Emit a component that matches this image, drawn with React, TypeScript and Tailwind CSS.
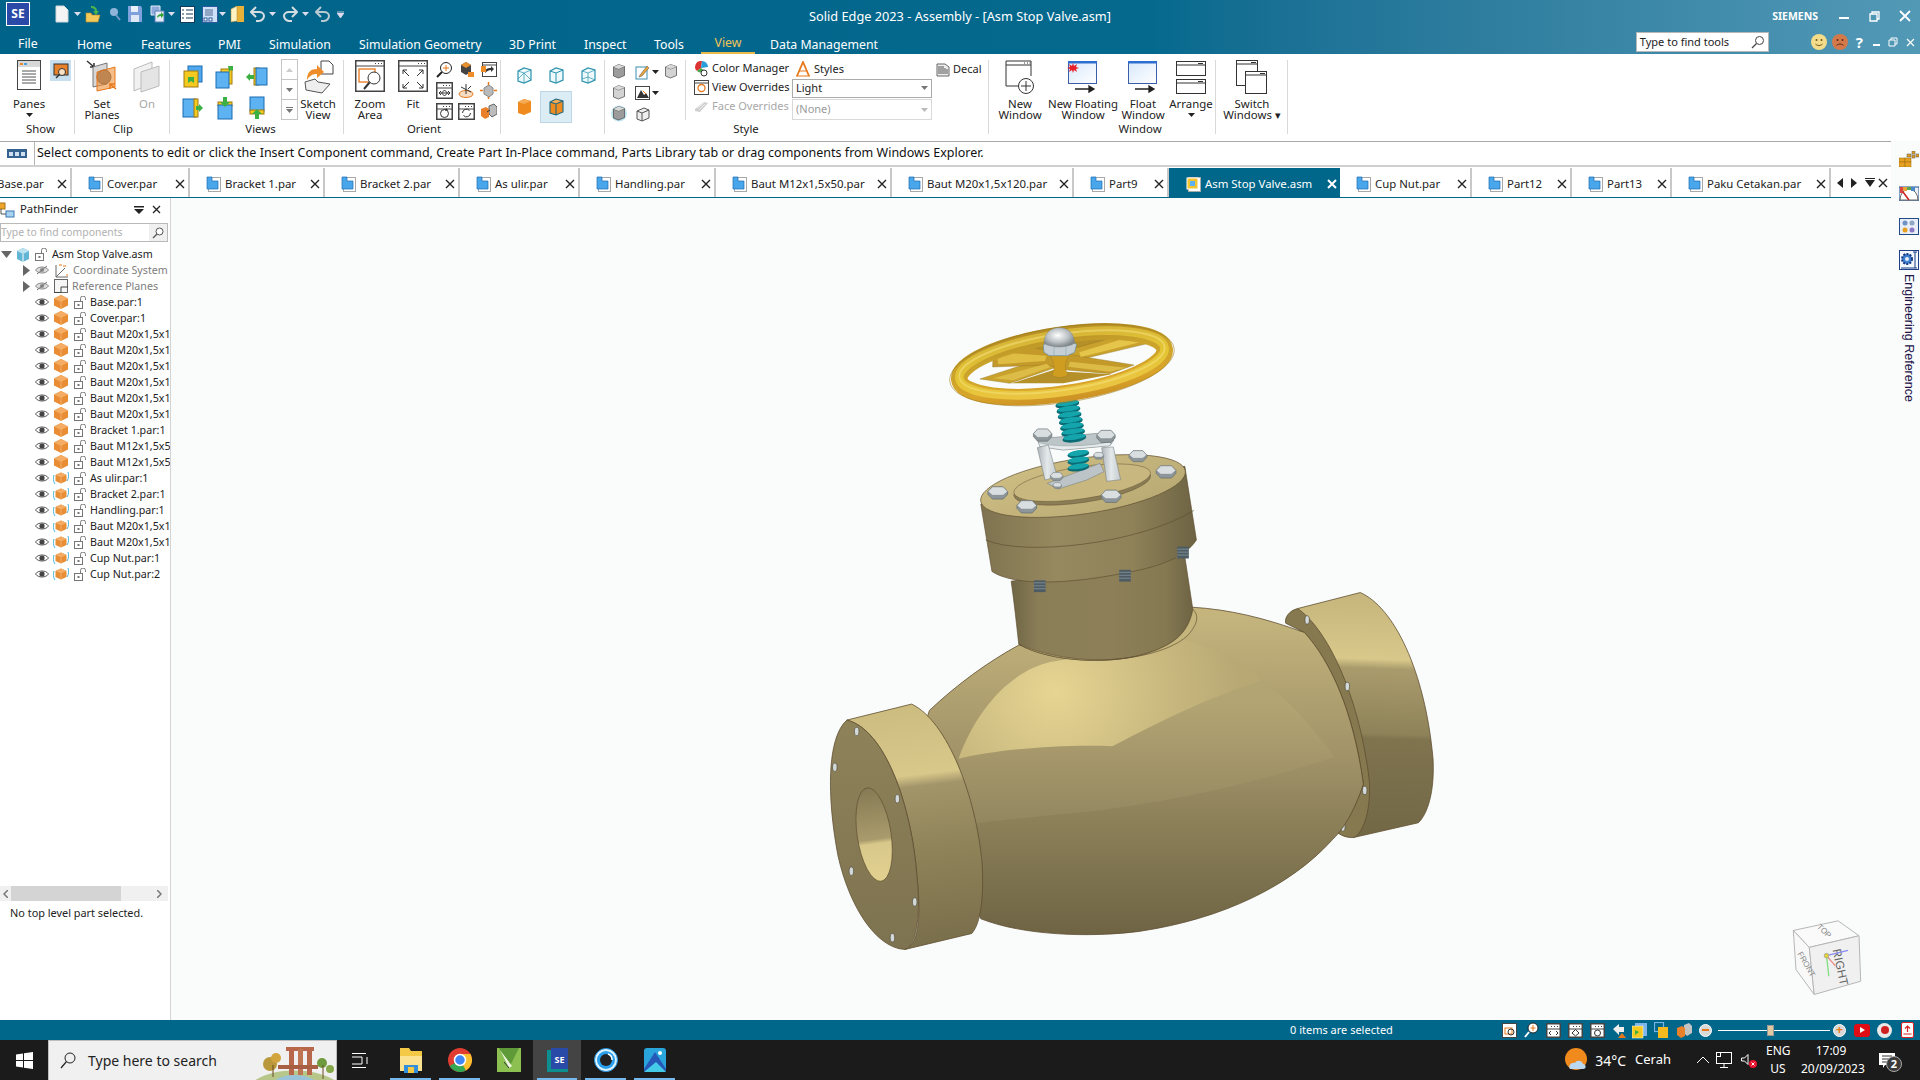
import React from 'react';

const Svg = ({ w, h, vb, children }: { w: number; h: number; vb?: string; children: React.ReactNode }) => (
  <svg width={w} height={h} viewBox={vb ?? `0 0 ${w} ${h}`} className="shrink-0">
    {children}
  </svg>
);

const Arrow = ({ color = '#222' }: { color?: string }) => (
  <Svg w={7} h={4}>
    <path d="M0 0h7L3.500 4z" fill={color} />
  </Svg>
);

/* ---------- quick access icons ---------- */
const QNew = () => (
  <Svg w={14} h={18}>
    <path d="M1 1h8l4 4v12H1z" fill="#f4f4f4" stroke="#cfd8dc" />
  </Svg>
);
const QOpen = () => (
  <Svg w={17} h={18}>
    <path d="M1 8h5l1 2h8l-2 7H1z" fill="#f3c95a" stroke="#b98d2a" strokeWidth="0.6" />
    <path d="M6 1c4 0 6 2 6 5h2l-3 4-3-4h2c0-2-2-3-4-3z" fill="#4bb34b" />
  </Svg>
);
const QSave = () => (
  <Svg w={16} h={18}>
    <path d="M1 1h13l1 2v14H1z" fill="#7fa1dc" />
    <rect x="4" y="1" width="7" height="6" fill="#e6effa" />
    <rect x="4" y="10" width="8" height="7" fill="#dfe8f5" />
  </Svg>
);
const QSaveAll = () => (
  <Svg w={16} h={18}>
    <path d="M1 1h9v9H1z" fill="#8fabdc" stroke="#e4ecf7" />
    <path d="M5 6h9v11H5z" fill="#e4ecf7" stroke="#5d7fb8" />
    <path d="M7 13c0-3 2-4 4-4v-2l3 3-3 3v-2c-2 0-3 1-4 2z" fill="#38a53c" />
  </Svg>
);
const QList = () => (
  <Svg w={15} h={17}>
    <rect x="0.500" y="0.500" width="14" height="16" fill="#fff" stroke="#16395b" />
    <path d="M2 4h2M6 4h7M2 8h2M6 8h7M2 12h2M6 12h7" stroke="#16395b" />
  </Svg>
);
const QProps = () => (
  <Svg w={16} h={17}>
    <rect x="0.500" y="0.500" width="15" height="16" fill="#cfe1f7" stroke="#2c5a9c" />
    <rect x="3" y="3" width="8" height="7" fill="#8fa6c4" />
    <rect x="2" y="12" width="3" height="3" fill="#fff" stroke="#2c5a9c" />
    <rect x="7" y="12" width="3" height="3" fill="#fff" stroke="#2c5a9c" />
  </Svg>
);
const QDoor = () => (
  <Svg w={15} h={18}>
    <rect x="7" y="1" width="7" height="16" fill="#e8b23a" />
    <path d="M7 1L1 4v13l6-1z" fill="#fff3c4" stroke="#b3872a" strokeWidth="0.5" />
  </Svg>
);
const QUndo = ({ flip = false, dim = false }: { flip?: boolean; dim?: boolean }) => (
  <Svg w={15} h={16}>
    <g transform={flip ? 'translate(15 0) scale(-1 1)' : undefined}>
      <path d="M6 1L1 6l5 5M1 6h8c3 0 5 2 5 4s-2 5-5 5H6" fill="none" stroke={dim ? '#b9c9d2' : '#d5dde2'} strokeWidth="2" />
    </g>
  </Svg>
);

/* ---------- ribbon icons ---------- */
const WindowFrame = ({ w, h, children }: { w: number; h: number; children?: React.ReactNode }) => (
  <Svg w={w} h={h}>
    <rect x="0.750" y="0.750" width={w - 1.5} height={h - 1.5} fill="#fff" stroke="#444" strokeWidth="1.500" />
    <path d={`M1 6h${w - 2}`} stroke="#444" />
    <path d={`M${w - 10} 3.500h1M${w - 7} 3.500h1M${w - 4} 3.500h1`} stroke="#444" />
    {children}
  </Svg>
);
const PanesIcon = () => (
  <Svg w={24} h={30}>
    <rect x="0.500" y="0.500" width="23" height="29" fill="#fff" stroke="#444" />
    <rect x="1" y="1" width="22" height="6" fill="#d8d8d8" />
    <rect x="3" y="3" width="3" height="2" fill="#e48a2c" />
    <rect x="7" y="3" width="3" height="2" fill="#4aa3df" />
    <path d="M5 11h14M5 14h14M5 17h14M5 20h14M5 23h14" stroke="#555" />
  </Svg>
);
const SearchPane = () => (
  <div className="w-[21px] h-[21px] bg-[#c7dfee] flex items-center justify-center">
    <Svg w={16} h={16}>
      <rect x="1" y="1" width="14" height="11" fill="#e8812a" stroke="#333" />
      <circle cx="9" cy="9" r="3.500" fill="#fbe2c6" stroke="#333" />
      <path d="M6.500 11.500L3 15" stroke="#333" strokeWidth="1.500" />
    </Svg>
  </div>
);
const SetPlanesIcon = () => (
  <Svg w={32} h={34}>
    <path d="M1 1l7 6M8 3v4H4" stroke="#333" fill="none" strokeWidth="1.500" />
    <path d="M7 7l14-4v21L7 27z" fill="#d8d8d8" stroke="#777" />
    <circle cx="18" cy="17" r="7" fill="#777" stroke="#444" />
    <path d="M11 12l18-5v20l-18 4z" fill="#f0913a" fillOpacity="0.6" stroke="#e8781a" />
    <path d="M30 29l-6-5M24 29v-5h5" stroke="#e8781a" fill="none" strokeWidth="1.500" />
  </Svg>
);
const OnIcon = () => (
  <Svg w={28} h={34}>
    <path d="M1 9l18-7v21L1 31z" fill="#f1f1f1" stroke="#bbb" />
    <path d="M8 12l18-6v20L8 32z" fill="#e4e4e4" stroke="#bbb" />
  </Svg>
);
const BlueDoc = ({ kind }: { kind: number }) => (
  <Svg w={22} h={24}>
    {kind === 0 && (
      <>
        <rect x="6" y="1" width="14" height="16" fill="#4fa8ef" stroke="#1b6cb0" />
        <rect x="2" y="6" width="14" height="16" fill="#f6c91e" stroke="#a07a10" />
        <path d="M6 12h6v6l-3-2-3 2z" fill="#3cb043" />
      </>
    )}
    {kind === 1 && (
      <>
        <rect x="7" y="4" width="11" height="15" fill="#f6c91e" stroke="#a07a10" />
        <rect x="2" y="7" width="13" height="16" fill="#5db2f2" stroke="#1b6cb0" />
        <path d="M14 1h5v5l-2-1-2 2z" fill="#3cb043" />
      </>
    )}
    {kind === 2 && (
      <>
        <rect x="8" y="3" width="5" height="17" fill="#f6c91e" stroke="#a07a10" />
        <rect x="10" y="3" width="11" height="17" fill="#5db2f2" stroke="#1b6cb0" />
        <path d="M0 12l4-4v2h4v4H4v2z" fill="#3cb043" />
      </>
    )}
    {kind === 3 && (
      <>
        <rect x="1" y="3" width="13" height="18" fill="#5db2f2" stroke="#1b6cb0" />
        <rect x="12" y="3" width="4" height="18" fill="#f6c91e" stroke="#a07a10" />
        <path d="M21 12l-4-4v2h-3v4h3v2z" fill="#3cb043" />
      </>
    )}
    {kind === 4 && (
      <>
        <rect x="4" y="6" width="14" height="4" fill="#f6c91e" stroke="#a07a10" />
        <rect x="4" y="9" width="14" height="14" fill="#5db2f2" stroke="#1b6cb0" />
        <path d="M11 11l-5-5h3V1h4v5h3z" fill="#3cb043" />
      </>
    )}
    {kind === 5 && (
      <>
        <rect x="4" y="1" width="14" height="14" fill="#5db2f2" stroke="#1b6cb0" />
        <rect x="4" y="14" width="14" height="4" fill="#f6c91e" stroke="#a07a10" />
        <path d="M11 13l5 5h-3v5H9v-5H6z" fill="#3cb043" />
      </>
    )}
  </Svg>
);
const SketchViewIcon = () => (
  <Svg w={32} h={34}>
    <path d="M19 1h8l4 4v9H19z" fill="#fff" stroke="#444" />
    <path d="M3 22l10-3 3 3 12 2-8 9-16-3z" fill="#eee" stroke="#555" />
    <path d="M5 20c0-8 4-11 10-11V5l7 7-7 6v-4c-4 0-7 1-10 6z" fill="#ef8c2a" />
  </Svg>
);
const ZoomAreaIcon = () => (
  <WindowFrame w={30} h={32}>
    <rect x="4" y="9" width="16" height="13" fill="none" stroke="#e8781a" strokeWidth="1.300" />
    <circle cx="19" cy="18" r="6" fill="#fff" stroke="#333" />
    <path d="M14.500 22.500L9 29" stroke="#333" strokeWidth="2" />
  </WindowFrame>
);
const FitIcon = () => (
  <WindowFrame w={30} h={32}>
    <path d="M5 10l6 6M5 10h4M5 10v4M25 10l-6 6M25 10h-4M25 10v4M5 28l6-6M5 28h4M5 28v-4M25 28l-6-6M25 28h-4M25 28v-4" stroke="#333" fill="none" />
  </WindowFrame>
);
const OrientIcon = ({ kind }: { kind: number }) => {
  if (kind === 0)
    return (
      <Svg w={17} h={17}>
        <circle cx="10" cy="7" r="5.500" fill="#fff" stroke="#222" />
        <path d="M10 4v6M7 7h6" stroke="#e8781a" />
        <path d="M6 11l-5 5" stroke="#222" strokeWidth="2" />
      </Svg>
    );
  if (kind === 1)
    return (
      <Svg w={17} h={17}>
        <path d="M3 4l5-3 5 3v7l-5 3-5-3z" fill="#444" />
        <path d="M3 4l5 3 5-3-5-3z" fill="#e8902e" />
        <rect x="10" y="11" width="6" height="5" fill="#ef8c2a" />
      </Svg>
    );
  if (kind === 2)
    return (
      <Svg w={17} h={17}>
        <rect x="2.500" y="1.500" width="14" height="14" fill="#fff" stroke="#444" />
        <path d="M2 4h14" stroke="#444" />
        <path d="M5 12c0-4 2-5 6-5v-2l3 3-3 3V9c-2 0-4 1-6 3z" fill="#333" />
        <rect x="1" y="5" width="5" height="6" fill="#ef8c2a" />
      </Svg>
    );
  if (kind === 3)
    return (
      <WindowFrame w={17} h={17}>
        <path d="M3 11h11M3 11l2-2M3 11l2 2M14 11l-2-2M14 11l-2 2" stroke="#333" fill="none" />
        <path d="M8.500 8l-3 3 3 3 3-3z" fill="none" stroke="#333" />
      </WindowFrame>
    );
  if (kind === 4)
    return (
      <Svg w={17} h={17}>
        <ellipse cx="8" cy="12" rx="7" ry="3.500" fill="#f5dcc2" stroke="#e8781a" />
        <path d="M8 2v10M3 5l10 5M13 4l-3 3" stroke="#333" fill="none" />
      </Svg>
    );
  if (kind === 5)
    return (
      <Svg w={17} h={17}>
        <path d="M4 6l5-3 4 3v6l-4 3-5-3z" fill="#b9b9b9" stroke="#888" />
        <path d="M8.500 0v3M8.500 15v2M0 8.500h3M14 8.500h3" stroke="#e8781a" strokeWidth="1.500" />
      </Svg>
    );
  if (kind === 6)
    return (
      <WindowFrame w={17} h={17}>
        <circle cx="8.500" cy="10.500" r="4" fill="none" stroke="#333" />
        <path d="M10 5l2 2-3 1z" fill="#333" />
      </WindowFrame>
    );
  if (kind === 7)
    return (
      <WindowFrame w={17} h={17}>
        <path d="M12.500 10a4 4 0 0 1-7 2.500M4.500 10a4 4 0 0 1 7-2.500" fill="none" stroke="#333" />
      </WindowFrame>
    );
  return (
    <Svg w={17} h={17}>
      <path d="M9 3l5-2 3 3v7l-5 3-3-3z" fill="#bcbcbc" stroke="#666" />
      <path d="M1 6l5-2 3 2v8l-4 2-4-3z" fill="#e8812a" />
      <path d="M7 9l3-2" stroke="#333" />
    </Svg>
  );
};
const CubeOutline = ({ variant = 0 }: { variant?: number }) => (
  <Svg w={17} h={19}>
    <path d="M2 5l6-3 7 2v10l-7 3-6-2z" fill="#eef9fc" stroke="#2a93ad" strokeWidth="1.200" />
    {variant === 0 && <path d="M2 5l6 2 7-3M8 7v10M2 13l6-6 7 7" stroke="#2a93ad" fill="none" strokeWidth="0.700" />}
    {variant === 1 && <path d="M2 5l6 2 7-3M8 7v10" stroke="#2a93ad" fill="none" />}
    {variant === 2 && <path d="M2 5l6 2 7-3M8 7v10M2 13l6-2 7 3" stroke="#2a93ad" fill="none" strokeWidth="0.700" />}
  </Svg>
);
const SolidCube = ({ outlined = false }: { outlined?: boolean }) => (
  <Svg w={17} h={20}>
    <path d="M2 5l6-3 7 2v11l-7 3-6-2z" fill="#ef8a1f" />
    <path d="M2 5l6 2 7-3-7-2z" fill="#f6ab55" />
    {outlined && <path d="M2 5l6-3 7 2v11l-7 3-6-2zM2 5l6 2 7-3M8 7v11" fill="none" stroke="#1c6a85" strokeWidth="1.100" />}
  </Svg>
);
const GreyCube = ({ glow = false, box = false }: { glow?: boolean; box?: boolean }) => (
  <Svg w={16} h={17}>
    {glow && <circle cx="8" cy="8.500" r="8" fill="#bfe6f2" />}
    <path d="M2.500 4l5-2.500 6 2v9l-6 2.500-5-2z" fill={box ? '#d3d3d3' : '#9c9c9c'} stroke="#555" strokeWidth="0.800" />
    <path d="M2.500 4l5 2 6-2.500" fill="none" stroke="#555" strokeWidth="0.800" />
    <path d="M2.500 4l5-2.500 6 2-6 2.500z" fill="#d8d8d8" />
  </Svg>
);
const ColorManagerIcon = () => (
  <Svg w={15} h={17}>
    <path d="M8 1a6 6 0 0 0-7 6c0 2 1 3 2 4l4-3z" fill="#d33" />
    <path d="M8 1a6 6 0 0 1 6 6l-7 1z" fill="#2a9ed8" />
    <path d="M3 11a6 6 0 0 0 8 0L7 8z" fill="#4aa84a" />
    <circle cx="10" cy="13" r="3" fill="#fff" stroke="#333" />
  </Svg>
);
const StylesIcon = () => (
  <Svg w={15} h={16}>
    <path d="M1 15L7 1l6 14" fill="none" stroke="#e8781a" strokeWidth="1.800" />
    <path d="M3 10h8M0 15h14" stroke="#e8781a" />
  </Svg>
);
const DecalIcon = () => (
  <Svg w={14} h={14}>
    <path d="M1 1h8l4 3v9H1z" fill="#eee" stroke="#666" />
    <path d="M3 3v8M5 3v8M7 3v8M9 5v6M11 6v5" stroke="#555" />
  </Svg>
);
const FaceIcon = () => (
  <Svg w={15} h={14}>
    <path d="M1 9l9-7 4 1-8 9-5-1z" fill="#cfcfcf" />
    <path d="M3 8l7-5M5 10l6-6" stroke="#eee" />
  </Svg>
);
const NewWindowIcon = () => (
  <Svg w={30} h={34}>
    <path d="M16 26H1V1h25v15" fill="#fff" stroke="#333" />
    <path d="M1 5h25M19 3h1M22 3h1M24.500 3h1" stroke="#333" />
    <circle cx="21" cy="26" r="7.500" fill="#fff" stroke="#333" />
    <path d="M21 21v10M16 26h10" stroke="#333" />
  </Svg>
);
const FloatIcon = ({ star = false }: { star?: boolean }) => (
  <Svg w={32} h={34}>
    <defs>
      <linearGradient id="floatfill" x1="0" y1="0" x2="1" y2="1">
        <stop offset="0" stopColor="#d7e8fb" />
        <stop offset="1" stopColor="#ffffff" />
      </linearGradient>
    </defs>
    <rect x="1.500" y="1.500" width="28" height="22" fill="url(#floatfill)" stroke="#3b5ea8" />
    <rect x="1" y="1" width="29" height="2.500" fill="#2f6fd0" />
    {star && <path d="M6 3l1 3 3-2-1 3 3 1-3 1 1 3-3-2-1 3-1-3-3 2 1-3-3-1 3-1-1-3 3 2z" fill="#e8202a" />}
    <path d="M8 29h18M22 26l5 3-5 3z" stroke="#222" strokeWidth="1.300" fill="#222" />
  </Svg>
);
const ArrangeIcon = () => (
  <Svg w={31} h={34}>
    <rect x="0.500" y="1.500" width="29" height="14" fill="#fff" stroke="#333" />
    <rect x="0.500" y="19.500" width="29" height="14" fill="#fff" stroke="#333" />
    <path d="M1 5h28M1 23h28M22 3.500h5M22 21.500h5" stroke="#333" />
  </Svg>
);
const SwitchIcon = () => (
  <Svg w={32} h={34}>
    <rect x="0.500" y="0.500" width="21" height="25" fill="#fff" stroke="#333" />
    <rect x="9.500" y="11.500" width="21" height="22" fill="#fff" stroke="#333" />
    <path d="M1 4h20M10 15h20M15 2.500h5M24 13.500h5" stroke="#333" />
  </Svg>
);

const GroupBox = ({ w, label, labelClass = '', children }: { w: string; label?: string; labelClass?: string; children: React.ReactNode }) => (
  <div className={`${w} h-[74px] mt-[6px] border-r border-[#d9d9d9] flex flex-col shrink-0`}>
    <div className="h-[60px] flex">{children}</div>
    <div className={`h-[14px] leading-[18px] text-center ${labelClass}`}>{label}</div>
  </div>
);

const BigButton = ({ w, icon, lines, arrow = false, muted = false, extra }: { w: string; icon: React.ReactNode; lines: string[]; arrow?: boolean; muted?: boolean; extra?: string }) => (
  <div className={`${w} flex flex-col items-center shrink-0 ${extra ?? ''}`}>
    <div className="h-[34px] flex items-start justify-center">{icon}</div>
    <div className={`mt-[4px] leading-[11px] text-center whitespace-nowrap ${muted ? 'text-[#a8a8a8]' : ''}`}>
      {lines.map((l) => (
        <div key={l}>{l}</div>
      ))}
    </div>
    {arrow && (
      <div className="mt-[4px] flex">
        <Arrow />
      </div>
    )}
  </div>
);

const Ribbon = () => (
  <div className="h-[87px] bg-white flex text-[11.400px] text-[#222] pl-0">
    <GroupBox w="w-[75px]" label="Show" labelClass="pl-[7px]">
      <BigButton w="w-[48px]" extra="ml-[5px]" icon={<PanesIcon />} lines={['Panes']} arrow />
      <div className="-ml-[3px]">
        <SearchPane />
      </div>
    </GroupBox>
    <GroupBox w="w-[95px]" label="Clip" labelClass="pl-[2px]">
      <BigButton w="w-[48px]" extra="ml-[3px]" icon={<SetPlanesIcon />} lines={['Set', 'Planes']} />
      <BigButton w="w-[36px]" extra="ml-[3px]" icon={<OnIcon />} lines={['On']} muted />
    </GroupBox>
    <GroupBox w="w-[174px]" label="Views" labelClass="pl-[8px]">
      <div className="grid grid-cols-[22px_22px_22px] gap-x-[10px] gap-y-[7px] pl-[12px] pt-[5px] h-fit">
        {[0, 1, 2, 3, 4, 5].map((k) => (
          <BlueDoc key={k} kind={k} />
        ))}
      </div>
      <div className="ml-[13px] mt-[-1px] w-[17px] h-[61px] border border-[#c5c5c5] flex flex-col text-[#999] text-[8px]">
        <div className="h-[20px] border-b border-[#c5c5c5] flex items-center justify-center">
          <Svg w={7} h={4}>
            <path d="M0 4h7L3.500 0z" fill="#ccc" />
          </Svg>
        </div>
        <div className="h-[20px] border-b border-[#c5c5c5] flex items-center justify-center">
          <Arrow color="#777" />
        </div>
        <div className="flex-1 flex flex-col items-center justify-center gap-[1px]">
          <div className="w-[7px] h-px bg-[#777]" />
          <Arrow color="#777" />
        </div>
      </div>
      <BigButton w="w-[38px]" extra="ml-[1px]" icon={<SketchViewIcon />} lines={['Sketch', 'View']} />
    </GroupBox>
    <GroupBox w="w-[157px]" label="Orient" labelClass="pl-[4px]">
      <BigButton w="w-[44px]" extra="ml-[4px]" icon={<ZoomAreaIcon />} lines={['Zoom', 'Area']} />
      <BigButton w="w-[42px]" icon={<FitIcon />} lines={['Fit']} />
      <div className="ml-[2px] grid grid-cols-[17px_17px_17px] gap-x-[5px] gap-y-[4px] h-fit pt-[1px]">
        {[0, 1, 2, 3, 4, 5, 6, 7, 8].map((k) => (
          <OrientIcon key={k} kind={k} />
        ))}
      </div>
    </GroupBox>
    <div className="w-[104px] h-[74px] mt-[6px] border-r border-[#d9d9d9] shrink-0 pl-[15px] pt-[6px]">
      <div className="flex gap-[15px]">
        <CubeOutline />
        <CubeOutline variant={1} />
        <CubeOutline variant={2} />
      </div>
      <div className="flex items-center mt-[6px]">
        <SolidCube />
        <div className="ml-[7px] w-[32px] h-[32px] bg-[#dcecf4] border border-[#bcd8e6] flex items-center justify-center">
          <SolidCube outlined />
        </div>
      </div>
    </div>
    <div className="w-[81px] h-[60px] mt-[6px] border-r border-[#d9d9d9] shrink-0 pl-[6px] pt-[1px] grid grid-rows-[21px_21px_21px]">
      <div className="flex items-center">
        <GreyCube />
        <div className="ml-[8px] flex items-center">
          <Svg w={15} h={16}>
            <rect x="1" y="3" width="11" height="12" fill="#fff" stroke="#3a8fb0" />
            <path d="M5 11l7-9 2 2-7 8-3 1z" fill="#e8a33a" stroke="#555" strokeWidth="0.500" />
          </Svg>
          <div className="ml-[2px]">
            <Arrow />
          </div>
          <div className="ml-[4px]">
            <GreyCube box />
          </div>
        </div>
      </div>
      <div className="flex items-center">
        <GreyCube box />
        <div className="ml-[8px] flex items-center">
          <Svg w={15} h={16}>
            <rect x="0.500" y="1.500" width="14" height="13" fill="#fff" stroke="#444" />
            <path d="M2 13l4-8 3 5 2-2 3 5z" fill="#333" />
            <path d="M8 6l3 3" stroke="#e8781a" />
          </Svg>
          <div className="ml-[2px]">
            <Arrow />
          </div>
        </div>
      </div>
      <div className="flex items-center">
        <GreyCube glow />
        <div className="ml-[8px]">
          <Svg w={15} h={16}>
            <path d="M2 5l7-3 5 2v8l-7 3-5-2z" fill="#eee" stroke="#555" />
            <path d="M2 5l5 2 7-3M7 7v8" stroke="#555" fill="none" />
          </Svg>
        </div>
      </div>
    </div>
    <GroupBox w="w-[303px]" label="Style" labelClass="pr-[182px]">
      <div className="pl-[8px] w-[106px] shrink-0 flex flex-col gap-[2px] pt-[0px] text-[11px]">
        <div className="h-[17px] flex items-center gap-[3px] whitespace-nowrap">
          <ColorManagerIcon />
          Color Manager
        </div>
        <div className="h-[17px] flex items-center gap-[3px] whitespace-nowrap">
          <Svg w={15} h={17}>
            <rect x="0.500" y="1.500" width="14" height="14" fill="#fff" stroke="#444" />
            <circle cx="7.500" cy="9" r="3.500" fill="none" stroke="#e8781a" strokeWidth="1.300" />
            <path d="M1 4h13" stroke="#444" />
          </Svg>
          View Overrides
        </div>
        <div className="h-[17px] flex items-center gap-[3px] whitespace-nowrap text-[#a8a8a8]">
          <FaceIcon />
          Face Overrides
        </div>
      </div>
      <div className="w-[140px] shrink-0 flex flex-col text-[11px]">
        <div className="h-[19px] flex items-center gap-[3px] pl-[4px]">
          <StylesIcon />
          Styles
        </div>
        <div className="h-[20px] border border-[#ababab] flex items-center justify-between px-[3px]">
          Light
          <Arrow color="#777" />
        </div>
        <div className="h-[21px] mt-px border border-[#d9d9d9] flex items-center justify-between px-[3px] text-[#9a9a9a]">
          (None)
          <Arrow color="#bbb" />
        </div>
      </div>
      <div className="pl-[4px] h-[19px] flex items-center gap-[3px] text-[11px]">
        <DecalIcon />
        Decal
      </div>
    </GroupBox>
    <GroupBox w="w-[227px]" label="Window" labelClass="pl-[76px]">
      <BigButton w="w-[56px]" extra="ml-[3px]" icon={<NewWindowIcon />} lines={['New', 'Window']} />
      <BigButton w="w-[70px]" icon={<FloatIcon star />} lines={['New Floating', 'Window']} />
      <BigButton w="w-[50px]" icon={<FloatIcon />} lines={['Float', 'Window']} />
      <BigButton w="w-[44px]" extra="ml-[1px]" icon={<ArrangeIcon />} lines={['Arrange']} arrow />
    </GroupBox>
    <GroupBox w="w-[72px]">
      <BigButton
        w="w-[72px]"
        icon={<SwitchIcon />}
        lines={['Switch', 'Windows \u25BE']}
      />
    </GroupBox>
  </div>
);

/* ---------- title bar ---------- */
const menuItems = [
  { label: 'File', cls: 'w-[59px] mb-[1px]' },
  { label: 'Home', cls: 'w-[64px]' },
  { label: 'Features', cls: 'w-[77px]' },
  { label: 'PMI', cls: 'w-[51px]' },
  { label: 'Simulation', cls: 'w-[90px]' },
  { label: 'Simulation Geometry', cls: 'w-[150px]' },
  { label: '3D Print', cls: 'w-[75px]' },
  { label: 'Inspect', cls: 'w-[70px]' },
  { label: 'Tools', cls: 'w-[61px]' },
];

const TitleBar = () => (
  <div className="h-[54px] bg-gradient-to-r from-[#00648a] via-[#05698e] via-60% to-[#5299b6] text-white flex flex-col">
    <div className="h-[29px] flex items-start text-[12.750px]">
      <div className="w-[809px] shrink-0 flex items-center pt-[2px] pl-[6px]">
        <div className="w-[24px] h-[24px] border border-white bg-[#2b4aa8] text-[12px] font-bold flex items-center justify-center">SE</div>
        <div className="ml-[25px] flex items-center">
          <QNew />
          <div className="ml-[5px]">
            <Arrow color="#dde" />
          </div>
          <div className="ml-[4px]">
            <QOpen />
          </div>
          <div className="ml-[6px]">
            <Svg w={14} h={16}>
              <circle cx="6" cy="6" r="4" fill="#8fb4d9" />
              <path d="M8 9l4 5" stroke="#6f9bc4" strokeWidth="2" />
            </Svg>
          </div>
          <div className="mr-[5px]" />
          <QSave />
          <div className="ml-[7px]">
            <QSaveAll />
          </div>
          <div className="ml-[2px]">
            <Arrow color="#dde" />
          </div>
          <div className="ml-[5px]">
            <QList />
          </div>
          <div className="ml-[7px]">
            <QProps />
          </div>
          <div className="ml-[1px]">
            <Arrow color="#dde" />
          </div>
          <div className="ml-[4px]">
            <QDoor />
          </div>
          <div className="ml-[5px]">
            <QUndo />
          </div>
          <div className="ml-[4px]">
            <Arrow color="#dde" />
          </div>
          <div className="ml-[7px]">
            <QUndo flip />
          </div>
          <div className="ml-[4px]">
            <Arrow color="#dde" />
          </div>
          <div className="ml-[6px]">
            <QUndo dim />
          </div>
          <div className="ml-[7px]">
            <Svg w={7} h={7}>
              <path d="M0 0h7M0 2h7L3.500 7z" stroke="#dde" fill="#dde" strokeWidth="0.800" />
            </Svg>
          </div>
        </div>
      </div>
      <div className="pt-[6px] leading-[20px] whitespace-nowrap">Solid Edge 2023 - Assembly - [Asm Stop Valve.asm]</div>
      <div className="ml-auto flex items-center pt-[8px]">
        <span className="text-[10.500px] font-bold leading-[16px] mr-[21px]">SIEMENS</span>
        <div className="w-[10px] h-[2px] bg-white mt-[3px] mr-[20px]" />
        <div className="mr-[19px]">
          <Svg w={11} h={11}>
            <path d="M3 3V1h7v7H8M1 3h7v7H1z" fill="none" stroke="#fff" strokeWidth="1.300" />
          </Svg>
        </div>
        <div className="mr-[9px]">
          <Svg w={12} h={12}>
            <path d="M1 1l10 10M11 1L1 11" stroke="#fff" strokeWidth="1.800" />
          </Svg>
        </div>
      </div>
    </div>
    <div className="h-[25px] flex items-end pl-[18px] text-[12.300px] leading-[18px]">
      {menuItems.map((m) => (
        <div key={m.label} className={`${m.cls} shrink-0`}>
          {m.label}
        </div>
      ))}
      <div className="w-[54px] shrink-0 -ml-[14px] mr-[15px] h-[22px] pt-[2px] text-center text-[#f0c35a] border-b-2 border-[#e9b949]">View</div>
      <div>Data Management</div>
      <div className="ml-auto mr-[5px] mb-[2px] flex items-center">
        <div className="w-[133px] h-[20px] bg-white border border-[#b7b7b7] text-[#222] text-[11px] flex items-center justify-between px-[3px] mr-[42px]">
          Type to find tools
          <Svg w={14} h={14}>
            <circle cx="8.500" cy="5.500" r="4" fill="none" stroke="#444" />
            <path d="M5.500 8.500L1 13" stroke="#444" strokeWidth="1.300" />
          </Svg>
        </div>
        <Svg w={16} h={16}>
          <circle cx="8" cy="8" r="8" fill="#f4dc8a" />
          <circle cx="5.500" cy="6" r="1" fill="#6b5720" />
          <circle cx="10.500" cy="6" r="1" fill="#6b5720" />
          <path d="M4.500 10c2 2 5 2 7 0" stroke="#6b5720" fill="none" />
        </Svg>
        <div className="ml-[5px]">
          <Svg w={16} h={16}>
            <circle cx="8" cy="8" r="8" fill="#d3794a" />
            <circle cx="5.500" cy="6" r="1" fill="#5a2d18" />
            <circle cx="10.500" cy="6" r="1" fill="#5a2d18" />
            <path d="M4.500 11.500c2-2 5-2 7 0" stroke="#5a2d18" fill="none" />
          </Svg>
        </div>
        <span className="ml-[8px] text-[15px] font-bold leading-none">?</span>
        <div className="ml-[10px] w-[7px] h-[2px] bg-white mt-[5px]" />
        <div className="ml-[8px]">
          <Svg w={10} h={10}>
            <path d="M3 3V1h6v6H7M1 3h6v6H1z" fill="none" stroke="#fff" />
          </Svg>
        </div>
        <div className="ml-[8px]">
          <Svg w={9} h={9}>
            <path d="M1 1l7 7M8 1L1 8" stroke="#fff" strokeWidth="1.200" />
          </Svg>
        </div>
      </div>
    </div>
  </div>
);

/* ---------- document tabs ---------- */
const docTabs = [
  { name: 'Base.par', cls: 'w-[72px]', clip: true },
  { name: 'Cover.par', cls: 'w-[118px]' },
  { name: 'Bracket 1.par', cls: 'w-[135px]' },
  { name: 'Bracket 2.par', cls: 'w-[135px]' },
  { name: 'As ulir.par', cls: 'w-[120px]' },
  { name: 'Handling.par', cls: 'w-[136px]' },
  { name: 'Baut M12x1,5x50.par', cls: 'w-[176px]' },
  { name: 'Baut M20x1,5x120.par', cls: 'w-[182px]' },
  { name: 'Part9', cls: 'w-[95px]' },
  { name: 'Asm Stop Valve.asm', cls: 'w-[171px]', active: true },
  { name: 'Cup Nut.par', cls: 'w-[132px]' },
  { name: 'Part12', cls: 'w-[100px]' },
  { name: 'Part13', cls: 'w-[100px]' },
  { name: 'Paku Cetakan.par', cls: 'w-[159px]' },
];

const TabIcon = ({ active = false }: { active?: boolean }) => (
  <Svg w={15} h={16}>
    <rect x="2.500" y="1.500" width="12" height="14" fill="#fff" stroke="#a9a9a9" />
    {active ? (
      <>
        <rect x="1" y="2" width="11" height="11" fill="#f5c431" stroke="#fff" />
        <rect x="4" y="5" width="5" height="5" fill="#5db2f2" />
      </>
    ) : (
      <path d="M1 1h5v4h6v8H1z" fill="#4aa6ea" stroke="#1d6fb3" strokeWidth="0.700" />
    )}
  </Svg>
);

const DocTabs = () => (
  <div className="h-[29px] mt-[1px] flex items-stretch border-b border-[#00668a] box-content text-[11.400px] text-[#222]">
    {docTabs.map((t) => (
      <div
        key={t.name}
        className={`${t.cls} shrink-0 overflow-hidden flex items-center pt-[2px] ${t.active ? 'bg-[#00668a] text-white pl-[17px]' : 'border-r-2 border-[#c8c8c8] pl-[16px]'}`}
      >
        {t.clip ? (
          <span className="whitespace-nowrap -ml-[19px]">Base.par</span>
        ) : (
          <>
            <TabIcon active={t.active} />
            <span className="ml-[4px] whitespace-nowrap">{t.name}</span>
          </>
        )}
        <div className="ml-auto mr-[3px]">
          <Svg w={10} h={10}>
            <path d="M1 1l8 8M9 1L1 9" stroke={t.active ? '#fff' : '#222'} strokeWidth={t.active ? 2 : 1.400} />
          </Svg>
        </div>
      </div>
    ))}
    <div className="flex items-center pl-[6px] gap-[8px]">
      <Svg w={6} h={10}>
        <path d="M6 0v10L0 5z" fill="#222" />
      </Svg>
      <Svg w={6} h={10}>
        <path d="M0 0v10l6-5z" fill="#222" />
      </Svg>
      <Svg w={10} h={9}>
        <path d="M0 0h10v1H0zM0 2h10L5 9z" fill="#222" />
      </Svg>
      <div className="-ml-[5px]">
        <Svg w={10} h={10}>
          <path d="M1 1l8 8M9 1L1 9" stroke="#222" strokeWidth="1.400" />
        </Svg>
      </div>
    </div>
  </div>
);

/* ---------- pathfinder ---------- */
const EyeIcon = ({ off = false }: { off?: boolean }) => (
  <Svg w={14} h={10}>
    <path d="M0.500 5C3 1 11 1 13.500 5 11 9 3 9 0.500 5z" fill={off ? '#ddd' : '#fff'} stroke={off ? '#8a8a8a' : '#555'} />
    <circle cx="7" cy="5" r={off ? 2 : 2.600} fill={off ? '#8a8a8a' : '#444'} />
    {off && <path d="M2 9L12 1" stroke="#777" />}
  </Svg>
);
const PartIcon = ({ adjust = false }: { adjust?: boolean }) => (
  <Svg w={16} h={16}>
    {adjust && <path d="M1 5c-1 3-1 6 1 9M15 2c1 3 1 6-1 9" fill="none" stroke="#34a9d8" strokeWidth="0.900" />}
    <path
      d={adjust ? 'M2.500 5L8 2.500 13.500 5v6L8 13.500 2.500 11z' : 'M1 4.500L8 1l7 3.500v7L8 15l-7-3.500z'}
      fill="#e88d33"
    />
    <path d={adjust ? 'M2.500 5L8 7.500 13.500 5 8 2.500z' : 'M1 4.500L8 8l7-3.500L8 1z'} fill="#f4ac62" />
    <path d={adjust ? 'M8 7.500v6' : 'M8 8v7'} stroke="#f7c38b" strokeWidth="0.700" />
  </Svg>
);
const LockIcon = () => (
  <Svg w={13} h={13}>
    <rect x="0.500" y="5.500" width="8" height="7" fill="#fff" stroke="#777" />
    <rect x="3.500" y="8" width="2" height="2" fill="#777" />
    <path d="M6.500 5V2.500a2.500 2.500 0 0 1 5 0V4" fill="none" stroke="#777" />
  </Svg>
);
const Tri = ({ down = false }: { down?: boolean }) =>
  down ? (
    <Svg w={11} h={7}>
      <path d="M0 0h11L5.500 7z" fill="#666" />
    </Svg>
  ) : (
    <Svg w={7} h={11}>
      <path d="M0 0v11l7-5.500z" fill="#666" />
    </Svg>
  );

const parts = [
  ['Base.par:1', false],
  ['Cover.par:1', false],
  ['Baut M20x1,5x1', false],
  ['Baut M20x1,5x1', false],
  ['Baut M20x1,5x1', false],
  ['Baut M20x1,5x1', false],
  ['Baut M20x1,5x1', false],
  ['Baut M20x1,5x1', false],
  ['Bracket 1.par:1', false],
  ['Baut M12x1,5x5', false],
  ['Baut M12x1,5x5', false],
  ['As ulir.par:1', true],
  ['Bracket 2.par:1', true],
  ['Handling.par:1', true],
  ['Baut M20x1,5x1', true],
  ['Baut M20x1,5x1', true],
  ['Cup Nut.par:1', true],
  ['Cup Nut.par:2', true],
] as [string, boolean][];

const PathFinder = () => (
  <div className="w-[171px] shrink-0 bg-white border-r border-[#d4d4d4] flex flex-col text-[#222] text-[10.700px] overflow-hidden">
    <div className="h-[25px] pb-[2px] flex items-center">
      <div className="-ml-[3px]">
        <Svg w={18} h={16}>
          <rect x="1" y="1" width="7" height="6" fill="#eea52a" stroke="#a57514" />
          <rect x="9" y="9" width="8" height="6" fill="#a7d2f2" stroke="#3d78ad" />
          <path d="M4 7v5h5" stroke="#555" fill="none" />
        </Svg>
      </div>
      <span className="ml-[5px] text-[11.300px]">PathFinder</span>
      <div className="ml-auto flex items-center gap-[8px] mr-[9px]">
        <Svg w={10} h={8}>
          <path d="M0 0h10v1.500H0zM0 3h10L5 8z" fill="#222" />
        </Svg>
        <Svg w={9} h={9}>
          <path d="M1 1l7 7M8 1L1 8" stroke="#222" strokeWidth="1.300" />
        </Svg>
      </div>
    </div>
    <div className="h-[19px] mr-[2px] border border-[#b9b9b9] flex items-center justify-between text-[#b0b0b0] text-[10.400px] whitespace-nowrap overflow-hidden">
      Type to find components
      <div className="bg-[#f0f0f0] h-full w-[18px] flex items-center justify-center shrink-0">
        <Svg w={12} h={12}>
          <circle cx="7.500" cy="4.500" r="3.500" fill="#fff" stroke="#555" />
          <path d="M5 7L1 11" stroke="#555" strokeWidth="1.300" />
        </Svg>
      </div>
    </div>
    <div className="mt-[4px] h-[640px] flex flex-col">
      <div className="h-[16px] flex items-center whitespace-nowrap">
        <div className="ml-[1px] w-[15px]">
          <Tri down />
        </div>
        <Svg w={14} h={15}>
          <path d="M1 4l6-3 6 3v8l-6 3-6-3z" fill="#62b5d4" />
          <path d="M1 4l6 3 6-3-6-3z" fill="#bde3f0" />
          <path d="M7 7v8" stroke="#fff" />
        </Svg>
        <div className="ml-[5px]">
          <LockIcon />
        </div>
        <span className="ml-[4px]">Asm Stop Valve.asm</span>
      </div>
      {[
        ['Coordinate System', 'c'],
        ['Reference Planes', 'r'],
      ].map(([label, kind]) => (
        <div key={kind} className="h-[16px] flex items-center whitespace-nowrap text-[#7d7d7d]">
          <div className="ml-[23px] w-[11px]">
            <Tri />
          </div>
          <div className="ml-[1px]">
            <EyeIcon off />
          </div>
          <div className="ml-[5px]">
            {kind === 'c' ? (
              <Svg w={15} h={15}>
                <path d="M2 2v12h12" fill="none" stroke="#666" />
                <path d="M2 14l9-9" stroke="#666" />
                <path d="M9 3h3M12 12h2" stroke="#e8781a" />
                <path d="M5 2h3" stroke="#e8781a" />
              </Svg>
            ) : (
              <Svg w={14} h={14}>
                <rect x="0.500" y="0.500" width="13" height="13" fill="#f6f6f6" stroke="#666" />
                <path d="M0 13.500h7V8h7" fill="none" stroke="#444" />
              </Svg>
            )}
          </div>
          <span className="ml-[4px]">{label}</span>
        </div>
      ))}
      {parts.map(([name, adjust], i) => (
        <div key={i} className="h-[16px] flex items-center whitespace-nowrap">
          <div className="ml-[35px]">
            <EyeIcon />
          </div>
          <div className="ml-[4px]">
            <PartIcon adjust={adjust} />
          </div>
          <div className="ml-[5px]">
            <LockIcon />
          </div>
          <span className="ml-[3px]">{name}</span>
        </div>
      ))}
    </div>
    <div className="h-[15px] mr-[2px] bg-[#f0f0f0] flex items-center">
      <div className="w-[11px] flex justify-center">
        <Svg w={5} h={8}>
          <path d="M5 0L1 4l4 4" fill="none" stroke="#777" strokeWidth="1.500" />
        </Svg>
      </div>
      <div className="w-[110px] h-full bg-[#d4d4d4]" />
      <div className="ml-auto mr-[6px] flex">
        <Svg w={5} h={8}>
          <path d="M0 0l4 4-4 4" fill="none" stroke="#777" strokeWidth="1.500" />
        </Svg>
      </div>
    </div>
    <div className="mt-[4px] ml-[10px] whitespace-nowrap text-[10.900px]">No top level part selected.</div>
  </div>
);

/* ---------- the 3D model ---------- */
const Bolt = ({ x, y, s = 1 }: { x: number; y: number; s?: number }) => (
  <g transform={`translate(${x} ${y}) scale(${s})`}>
    <path d="M-22 0l10-11h24l10 11v7l-10 11h-24l-10-11z" fill="#8d979b" stroke="#5e666a" strokeWidth="1.500" />
    <path d="M-22 0l10-11h24l10 11-10 9h-24z" fill="#d9dee0" stroke="#6f787c" strokeWidth="1.200" />
  </g>
);
const Stud = ({ x, y }: { x: number; y: number }) => (
  <g>
    <rect x={x - 13} y={y - 14} width="26" height="28" fill="#4d5b63" />
    <path d={`M${x - 13} ${y - 8}h26M${x - 13} ${y - 1}h26M${x - 13} ${y + 6}h26`} stroke="#83919a" strokeWidth="2" />
  </g>
);
const Hole = ({ x, y }: { x: number; y: number }) => (
  <ellipse cx={x} cy={y} rx="5" ry="10" fill="#d3d8d9" stroke="#4d4a3a" strokeWidth="1.500" />
);
const springTop = [0, 1, 2, 3, 4, 5, 6];
const springLow = [0, 1, 2];

const Valve = () => (
  <svg width={700} height={660} viewBox="0 0 1568 1568" preserveAspectRatio="none" className="ml-[629px] mt-[102px] block">
    <defs>
      <linearGradient id="rfl" gradientUnits="userSpaceOnUse" x1="1320" y1="700" x2="1300" y2="1270">
        <stop offset="0" stopColor="#c6b57c" />
        <stop offset="0.27" stopColor="#d8c88a" />
        <stop offset="0.31" stopColor="#a99b6c" />
        <stop offset="0.58" stopColor="#8e8259" />
        <stop offset="0.6" stopColor="#80744f" />
        <stop offset="1" stopColor="#726846" />
      </linearGradient>
      <linearGradient id="lfl" gradientUnits="userSpaceOnUse" x1="260" y1="960" x2="330" y2="1510">
        <stop offset="0" stopColor="#cdbc80" />
        <stop offset="0.3" stopColor="#d8c88a" />
        <stop offset="0.35" stopColor="#a3956a" />
        <stop offset="0.62" stopColor="#8f8359" />
        <stop offset="1" stopColor="#7b704c" />
      </linearGradient>
      <linearGradient id="body" gradientUnits="userSpaceOnUse" x1="0" y1="740" x2="0" y2="1510">
        <stop offset="0" stopColor="#c5b57d" />
        <stop offset="0.45" stopColor="#a19268" />
        <stop offset="0.65" stopColor="#8c8059" />
        <stop offset="1" stopColor="#6e6444" />
      </linearGradient>
      <radialGradient id="hi" gradientUnits="userSpaceOnUse" cx="570" cy="930" r="420">
        <stop offset="0" stopColor="#e6d592" />
        <stop offset="0.6" stopColor="#c9b97f" />
        <stop offset="1" stopColor="#b7a874" />
      </radialGradient>
      <linearGradient id="hi2" gradientUnits="userSpaceOnUse" x1="0" y1="960" x2="0" y2="1240">
        <stop offset="0" stopColor="#b3a473" />
        <stop offset="1" stopColor="#938760" />
      </linearGradient>
      <linearGradient id="cyl" x1="0" y1="0" x2="1" y2="0">
        <stop offset="0" stopColor="#6f6545" />
        <stop offset="0.15" stopColor="#8a7e57" />
        <stop offset="0.55" stopColor="#8d8059" />
        <stop offset="0.85" stopColor="#857952" />
        <stop offset="1" stopColor="#6e6444" />
      </linearGradient>
      <linearGradient id="capside" x1="0" y1="0" x2="1" y2="0">
        <stop offset="0" stopColor="#7f7350" />
        <stop offset="0.35" stopColor="#96895f" />
        <stop offset="0.7" stopColor="#8f8259" />
        <stop offset="1" stopColor="#6d6343" />
      </linearGradient>
      <linearGradient id="captop" x1="0" y1="0" x2="1" y2="1">
        <stop offset="0" stopColor="#cfbf84" />
        <stop offset="1" stopColor="#b7a873" />
      </linearGradient>
      <linearGradient id="holeg" x1="0" y1="0" x2="0" y2="1">
        <stop offset="0" stopColor="#867a54" />
        <stop offset="0.55" stopColor="#a99b6c" />
        <stop offset="0.6" stopColor="#d8c88a" />
        <stop offset="1" stopColor="#e2d190" />
      </linearGradient>
      <linearGradient id="face" x1="0" y1="0" x2="0" y2="1">
        <stop offset="0" stopColor="#8e8259" />
        <stop offset="1" stopColor="#7e7350" />
      </linearGradient>
      <linearGradient id="rim" gradientUnits="userSpaceOnUse" x1="0" y1="30" x2="0" y2="270">
        <stop offset="0" stopColor="#b48c25" />
        <stop offset="0.35" stopColor="#c9a32a" />
        <stop offset="0.75" stopColor="#d9a52a" />
        <stop offset="1" stopColor="#c98d22" />
      </linearGradient>
      <linearGradient id="rimlight" gradientUnits="userSpaceOnUse" x1="0" y1="30" x2="0" y2="270">
        <stop offset="0" stopColor="#d4b138" />
        <stop offset="0.5" stopColor="#e4c534" />
        <stop offset="1" stopColor="#eec548" />
      </linearGradient>
      <linearGradient id="rod" x1="0" y1="0" x2="1" y2="0">
        <stop offset="0" stopColor="#aeb6ba" />
        <stop offset="0.5" stopColor="#e4e9eb" />
        <stop offset="1" stopColor="#c2c9cc" />
      </linearGradient>
      <radialGradient id="dome" cx="0.45" cy="0.4" r="0.6">
        <stop offset="0" stopColor="#ffffff" />
        <stop offset="0.6" stopColor="#b9bfc2" />
        <stop offset="1" stopColor="#7e868a" />
      </radialGradient>
    </defs>
    {/* right flange */}
    <path d="M1115 733L1255 695C1330 730 1400 880 1418 1090C1422 1170 1405 1222 1385 1242L1240 1277L1150 1100Z" fill="url(#rfl)" stroke="#5e4d30" strokeWidth="1.800" />
    <path d="M1115 733C1095 738 1085 755 1088 768L1130 790C1190 860 1240 980 1262 1150C1240 1220 1210 1260 1200 1262C1210 1272 1225 1278 1240 1277C1262 1268 1280 1210 1275 1140C1255 960 1190 790 1115 733Z" fill="#86794f" stroke="#5e4d30" strokeWidth="1.800" />
    <Hole x={1136} y={760} />
    <Hole x={1226} y={918} />
    <Hole x={1265} y={1165} />
    <Hole x={1216} y={1252} />
    {/* body */}
    <path d="M290 975C350 915 420 860 490 820L880 730C960 735 1040 755 1130 790C1190 860 1240 980 1262 1150C1240 1220 1215 1260 1190 1285C1100 1390 950 1470 760 1500C650 1515 500 1510 405 1470L250 1100Z" fill="url(#body)" stroke="#5e4d30" strokeWidth="1.800" />
    <path d="M355 1090C450 1065 600 1055 700 1060C800 1005 900 950 1032 905C1100 950 1150 1020 1196 1085C1050 1140 850 1190 650 1215C550 1225 450 1235 380 1245Z" fill="url(#hi2)" />
    <path d="M355 1090C400 960 480 880 560 860L860 808C950 830 1010 870 1032 905C900 950 800 1005 700 1060C600 1055 450 1065 355 1090Z" fill="url(#hi)" />
    {/* neck */}
    <path d="M473 668C480 720 485 770 490 818C560 860 700 870 790 835C840 815 870 790 880 735L862 610Z" fill="url(#cyl)" stroke="#5e4d30" strokeWidth="1.500" />
    <path d="M490 818C560 860 700 870 790 835C840 815 870 790 880 735C895 750 890 770 870 795C820 850 640 885 490 818Z" fill="#c4b57c" stroke="#5e4d30" strokeWidth="1.500" />
    {/* cap */}
    <path d="M405 485L430 645C480 680 600 675 720 650C800 635 860 615 888 570L862 395Z" fill="url(#capside)" stroke="#5e4d30" strokeWidth="1.500" />
    <path d="M416 570C500 610 760 580 882 500" fill="none" stroke="#5e4d30" strokeWidth="1.500" />
    <Stud x={537} y={680} />
    <Stud x={728} y={655} />
    <Stud x={858} y={600} />
    <ellipse cx="634" cy="442" rx="232" ry="66" transform="rotate(-9 634 442)" fill="url(#captop)" stroke="#5e4d30" strokeWidth="1.500" />
    <ellipse cx="632" cy="441" rx="155" ry="40" transform="rotate(-9 632 441)" fill="#8a7d55" stroke="#5e4d30" />
    <ellipse cx="632" cy="434" rx="155" ry="38" transform="rotate(-9 632 434)" fill="#c8b87f" stroke="#5e4d30" />
    <Bolt x={443} y={455} />
    <Bolt x={508} y={488} />
    <Bolt x={697} y={463} />
    <Bolt x={820} y={405} />
    <Bolt x={757} y={368} s={0.9} />
    {/* bracket, stem and hand wheel, drawn in the coordinates of a close crop */}
    <g transform="translate(291 35.6) scale(0.747 0.792)">
      <path d="M352 505L510 445L522 470L470 495L385 522Z" fill="#bcc4c7" stroke="#6e767a" strokeWidth="1.500" />
      {springLow.map((i) => (
        <g key={i}>
          <ellipse cx="445" cy={418 + i * 20} rx="33" ry="11" transform={`rotate(-8 445 ${418 + i * 20})`} fill="#0a6b75" />
          <ellipse cx="445" cy={414 + i * 20} rx="31" ry="8" transform={`rotate(-8 445 ${414 + i * 20})`} fill="#14a4ac" />
        </g>
      ))}
      <path d="M322 372L500 355L552 375L540 392L400 405L330 395Z" fill="#bcc5c8" stroke="#6e767a" strokeWidth="1.500" />
      <path d="M325 382C360 395 450 398 545 380L540 392L400 405L330 395Z" fill="#e6ebed" stroke="#6e767a" />
      <path d="M322 398L355 390L382 485L345 495Z" fill="url(#rod)" stroke="#6e767a" strokeWidth="1.500" />
      <path d="M515 398L550 396L572 494L530 499Z" fill="url(#rod)" stroke="#6e767a" strokeWidth="1.500" />
      <Bolt x={380} y={482} s={0.85} />
      <Bolt x={506} y={420} s={0.7} />
      <Bolt x={382} y={510} s={0.6} />
      {springTop.map((i) => (
        <g key={i}>
          <ellipse cx={412 + i * 3.5} cy={268 + i * 17} rx="36" ry="12" transform={`rotate(-8 ${412 + i * 3.5} ${268 + i * 17})`} fill="#0a6b75" />
          <ellipse cx={412 + i * 3.5} cy={264 + i * 17} rx="34" ry="8" transform={`rotate(-8 ${412 + i * 3.5} ${264 + i * 17})`} fill="#14a4ac" />
        </g>
      ))}
      <Bolt x={338} y={356} s={1.25} />
      <Bolt x={528} y={360} s={1.25} />
      {/* wheel */}
      <ellipse cx="397" cy="128" rx="280" ry="70" transform="rotate(-9 397 128)" fill="#f9fcfb" />
      <path d="M250 85L380 115L445 105L640 42L560 35L300 55Z" fill="#b58f28" />
      <path d="M245 205L370 165L410 170L545 178L400 205Z" fill="#b58f28" />
      <path d="M640 42L656 85L445 135L370 160L240 205L150 192L340 130L440 98Z" fill="#c9a22e" stroke="#8f7320" strokeWidth="1.200" />
      <path d="M190 102L245 85L360 108L440 122L612 150L540 176L410 165L350 150L188 156Z" fill="#c39a2a" stroke="#8f7320" strokeWidth="1.200" />
      <path d="M448 112L635 55L645 78L452 126Z" fill="#e6c64a" />
      <path d="M200 112L350 122L345 138L205 148Z" fill="#dfbc42" />
      <path d="M190 190L350 146L362 156L250 196Z" fill="#dcbc46" />
      <path d="M420 140L590 158L540 170L415 155Z" fill="#dcbc46" />
      <path d="M350 110C370 125 400 125 425 110C405 135 400 160 415 180C395 190 380 190 365 180C380 160 370 130 350 110Z" fill="#cf9d20" stroke="#8f7320" />
      <ellipse cx="396" cy="148" rx="311" ry="88" transform="rotate(-8.500 396 148)" fill="none" stroke="url(#rim)" strokeWidth="50" />
      <ellipse cx="396" cy="144" rx="311" ry="86" transform="rotate(-8.500 396 144)" fill="none" stroke="url(#rimlight)" strokeWidth="26" />
      <ellipse cx="396" cy="141" rx="311" ry="84" transform="rotate(-8.500 396 141)" fill="none" stroke="#f4e27c" strokeWidth="6" strokeOpacity="0.55" />
      <ellipse cx="396" cy="150" rx="340" ry="113" transform="rotate(-8.500 396 150)" fill="none" stroke="#967419" strokeWidth="1.500" />
      {/* cap nut */}
      <path d="M340 90L360 78H420L440 88L434 112L412 122H358L342 112Z" fill="#c5ced2" stroke="#5f8fa3" strokeWidth="2" />
      <path d="M372 94V120M408 94V120" stroke="#5f8fa3" />
      <path d="M342 85C342 55 362 38 388 38C414 38 434 55 434 85C410 100 365 100 342 85Z" fill="url(#dome)" stroke="#7a8286" />
    </g>
    {/* left flange */}
    <path d="M105 998L250 960C330 1000 395 1180 408 1340C412 1420 405 1480 385 1505L235 1543C270 1530 270 1450 262 1370C250 1200 190 1020 105 998Z" fill="url(#lfl)" stroke="#5e4d30" strokeWidth="1.800" />
    <path d="M105 998C60 1040 60 1180 85 1320C110 1440 170 1540 235 1543C265 1530 270 1450 262 1370C250 1200 190 1020 105 998Z" fill="url(#face)" stroke="#5e4d30" strokeWidth="1.800" />
    <ellipse cx="166" cy="1270" rx="38" ry="112" transform="rotate(-8 166 1270)" fill="url(#holeg)" stroke="#5e4d30" strokeWidth="1.500" />
    <Hole x={127} y={1025} />
    <Hole x={78} y={1110} />
    <Hole x={218} y={1185} />
    <Hole x={115} y={1357} />
    <Hole x={257} y={1430} />
    <Hole x={207} y={1515} />
  </svg>
);

const NavCube = () => (
  <div className="absolute right-[28px] bottom-[22px]">
    <Svg w={73} h={80} vb="90 115 220 240">
      <path d="M100 152L235 123L298 168L148 203Z" fill="#fafafa" stroke="#b5b5b5" strokeWidth="3" />
      <path d="M100 152L148 203L163 345L108 270Z" fill="#f8f8f8" stroke="#b5b5b5" strokeWidth="3" />
      <path d="M148 203L298 168L303 305L163 345Z" fill="#f0f0f0" stroke="#b5b5b5" strokeWidth="3" />
      <text x="0" y="0" transform="translate(218 210) rotate(78)" fontSize="36" fill="#666" fontFamily="Liberation Sans, sans-serif">RIGHT</text>
      <text x="0" y="0" transform="translate(170 142) rotate(45)" fontSize="24" fill="#888" fontFamily="Liberation Sans, sans-serif">TOP</text>
      <text x="0" y="0" transform="translate(112 222) rotate(60)" fontSize="24" fill="#888" fontFamily="Liberation Sans, sans-serif">FRONT</text>
      <path d="M200 228L265 212" stroke="#8a8af0" strokeWidth="4" />
      <path d="M200 228L207 290" stroke="#7fe07f" strokeWidth="4" />
      <path d="M200 228L226 258" stroke="#e88" strokeWidth="4" />
      <circle cx="200" cy="228" r="7" fill="#e3d23a" stroke="#999" strokeWidth="2" />
    </Svg>
  </div>
);

const SidePanel = () => (
  <div className="w-[29px] shrink-0 bg-[#f9fcfb] flex flex-col items-center pt-[10px] pl-[6px]">
    <Svg w={20} h={16}>
      <rect x="0" y="7" width="6" height="4" fill="#e5a11f" stroke="#9b6a10" strokeWidth="0.500" />
      <rect x="0" y="11" width="6" height="5" fill="#e5a11f" stroke="#9b6a10" strokeWidth="0.500" />
      <rect x="6" y="7" width="6" height="4" fill="#e5a11f" stroke="#9b6a10" strokeWidth="0.500" />
      <rect x="6" y="11" width="6" height="5" fill="#e5a11f" stroke="#9b6a10" strokeWidth="0.500" />
      <rect x="8" y="3" width="4" height="3" fill="#e5a11f" stroke="#555" strokeWidth="0.500" />
      <rect x="13" y="0" width="3" height="3" fill="#e5a11f" stroke="#555" strokeWidth="0.500" />
      <rect x="13" y="4" width="3" height="3" fill="#e5a11f" stroke="#555" strokeWidth="0.500" />
      <rect x="17" y="3" width="3" height="3" fill="#e5a11f" stroke="#555" strokeWidth="0.500" />
    </Svg>
    <div className="mt-[17px]">
      <Svg w={20} h={17}>
        <path d="M0 3h20v14H0z" fill="#e8f0f6" stroke="#1f4a86" />
        <path d="M1 16a9 11 0 0 1 18 0z" fill="#fff" stroke="#444" strokeWidth="0.800" />
        <path d="M1 3h3v6H1z" fill="#d44" />
        <path d="M4 3h4v4H4z" fill="#e8a33a" />
        <path d="M8 3h4v3H8z" fill="#5aa84a" />
        <path d="M12 3h4v4h-4z" fill="#4a88c8" />
        <path d="M4 8l6 8" stroke="#c22" strokeWidth="1.500" />
      </Svg>
    </div>
    <div className="mt-[17px]">
      <Svg w={20} h={17}>
        <rect x="0.500" y="0.500" width="19" height="16" fill="#e8eef7" stroke="#1f4a86" />
        <circle cx="6" cy="5" r="2.500" fill="#6f92c4" />
        <circle cx="13" cy="5" r="2.500" fill="#8fa6c4" />
        <circle cx="6" cy="12" r="2.500" fill="#e5a11f" />
        <circle cx="13" cy="12" r="2.500" fill="#8a78c4" />
      </Svg>
    </div>
    <div className="mt-[15px]">
      <Svg w={20} h={20}>
        <rect x="0.500" y="0.500" width="19" height="19" fill="#f4f8fc" stroke="#1f3f86" />
        <circle cx="8" cy="9" r="5" fill="#3f7fd0" stroke="#173a86" strokeDasharray="2 1.200" strokeWidth="2" />
        <circle cx="8" cy="9" r="2" fill="#e8eef7" />
        <path d="M16 2v16M14 2h4M14 18h4M2 18h12" stroke="#173a86" />
      </Svg>
    </div>
    <div className="mt-[4px] [writing-mode:vertical-rl] font-['Liberation_Sans',sans-serif] text-[12.500px] text-[#23124a] whitespace-nowrap leading-none">Engineering Reference</div>
  </div>
);

/* ---------- status bar ---------- */
const StatusBar = () => (
  <div className="h-[20px] bg-[#00668a] flex items-center text-white text-[11px] shrink-0">
    <span className="ml-[1290px]">0 items are selected</span>
    <div className="ml-auto mr-[6px] flex items-center">
      <div className="bg-white flex">
        <Svg w={15} h={15}>
          <rect x="0.500" y="0.500" width="14" height="14" fill="#fff" stroke="#444" />
          <rect x="3" y="5" width="7" height="6" fill="none" stroke="#e8781a" />
          <circle cx="9" cy="9" r="3" fill="none" stroke="#333" />
        </Svg>
      </div>
      <div className="ml-[7px] flex">
        <Svg w={15} h={16}>
          <circle cx="9" cy="6" r="5" fill="#fff" stroke="#222" />
          <path d="M9 3v6M6.500 6h5" stroke="#e8781a" />
          <path d="M5 10l-4 5" stroke="#fff" strokeWidth="2" />
        </Svg>
      </div>
      <div className="ml-[7px] flex">
        <WindowFrame w={15} h={15}>
          <path d="M5 8l-2 2 2 2M10 8l2 2-2 2" stroke="#333" fill="none" />
        </WindowFrame>
      </div>
      <div className="ml-[7px] flex">
        <WindowFrame w={15} h={15}>
          <path d="M7.500 6.500l-3.500 3.500 3.500 3 3.500-3z" stroke="#333" fill="none" />
        </WindowFrame>
      </div>
      <div className="ml-[7px] flex">
        <WindowFrame w={15} h={15}>
          <circle cx="7.500" cy="10" r="3" stroke="#333" fill="none" />
        </WindowFrame>
      </div>
      <div className="ml-[7px] flex">
        <Svg w={17} h={17}>
          <path d="M1 7l6-5v3h5v5H7v3z" fill="#eee" />
          <path d="M10 11l4 5H6z" fill="#e8781a" />
        </Svg>
      </div>
      <div className="ml-[3px] flex">
        <Svg w={15} h={17}>
          <rect x="3" y="1" width="12" height="13" fill="#7fb6ea" />
          <rect x="0" y="4" width="11" height="12" fill="#f6c91e" stroke="#fff" strokeWidth="0.500" />
          <path d="M3 8l4 2-4 3z" fill="#3cb043" />
        </Svg>
      </div>
      <div className="ml-[7px] flex">
        <Svg w={16} h={17}>
          <rect x="0.500" y="0.500" width="9" height="9" fill="none" stroke="#78b5e8" strokeWidth="1.200" />
          <rect x="4" y="5" width="10" height="11" fill="#f6b91e" />
        </Svg>
      </div>
      <div className="ml-[6px] flex">
        <Svg w={16} h={17}>
          <path d="M8 3l5-2 3 3v7l-5 3-3-3z" fill="#c4c4c4" />
          <path d="M1 6l5-2 3 2v8l-4 2-4-3z" fill="#e8812a" />
        </Svg>
      </div>
      <div className="ml-[7px] w-[13px] h-[13px] rounded-full bg-[#d8d8d8] border border-white flex items-center justify-center">
        <div className="w-[7px] h-[1.500px] bg-[#e8781a]" />
      </div>
      <div className="ml-[6px] w-[112px] flex items-center">
        <div className="h-px w-[49px] bg-white" />
        <div className="w-[7px] h-[11px] bg-[#e0c8a0] border border-[#999]" />
        <div className="h-px flex-1 bg-white" />
      </div>
      <div className="ml-[3px] w-[13px] h-[13px] rounded-full bg-[#d8d8d8] border border-white flex items-center justify-center text-[#e8781a] text-[12px] leading-none font-bold">+</div>
      <div className="ml-[8px] w-[16px] h-[13px] rounded-[3px] bg-[#e00d14] flex items-center justify-center">
        <Svg w={5} h={6}>
          <path d="M0 0l5 3-5 3z" fill="#fff" />
        </Svg>
      </div>
      <div className="ml-[7px] w-[15px] h-[15px] rounded-full bg-[#e8e8e8] flex items-center justify-center">
        <div className="w-[8px] h-[8px] rounded-full bg-[#d02020]" />
      </div>
      <div className="ml-[9px] w-[13px] h-[16px] rounded-[2px] bg-white border border-[#d22] flex items-center justify-center">
        <Svg w={9} h={10}>
          <path d="M4.500 7V1M2 3.500L4.500 1 7 3.500M0.500 9h8" stroke="#d22" fill="none" strokeWidth="1.200" />
        </Svg>
      </div>
    </div>
  </div>
);

/* ---------- windows taskbar ---------- */
const AppSlot = ({ w, running = true, active = false, children }: { w: string; running?: boolean; active?: boolean; children: React.ReactNode }) => (
  <div className={`${w} h-full flex flex-col items-center justify-center relative ${active ? 'bg-[#444444]' : ''}`}>
    {children}
    {running && <div className="absolute bottom-0 left-[4px] right-[4px] h-[2px] bg-[#76b9ed]" />}
  </div>
);

const Taskbar = () => (
  <div className="h-[40px] bg-[#1b1b1b] flex items-center text-white font-['Noto_Sans',sans-serif] shrink-0">
    <div className="w-[48px] flex justify-center">
      <Svg w={17} h={17}>
        <path d="M0 2.500l7-1v6.500H0zM8 1.300l9-1.300v8H8zM0 9h7v6.500l-7-1zM8 9h9v8l-9-1.300z" fill="#fff" />
      </Svg>
    </div>
    <div className="w-[289px] h-full bg-[#f0f0f0] border-t border-x border-[#bdbdbd] flex items-center text-[#222] text-[14px] overflow-hidden">
      <div className="ml-[11px]">
        <Svg w={16} h={17}>
          <circle cx="10" cy="6" r="5" fill="none" stroke="#222" />
          <path d="M6.500 9.500L1 16" stroke="#222" strokeWidth="1.200" />
        </Svg>
      </div>
      <span className="ml-[12px] whitespace-nowrap">Type here to search</span>
      <div className="ml-auto">
        <Svg w={82} h={40}>
          <path d="M0 40c20-14 60-14 82 0z" fill="#b7c78a" />
          <path d="M20 40c10-8 30-8 42 0z" fill="#9ac2d8" />
          <rect x="32" y="6" width="28" height="4" fill="#b8674a" />
          <rect x="35" y="8" width="5" height="26" fill="#b8674a" />
          <rect x="44" y="8" width="5" height="26" fill="#c07552" />
          <rect x="53" y="8" width="5" height="26" fill="#b8674a" />
          <rect x="24" y="24" width="40" height="4" fill="#a85e42" />
          <circle cx="16" cy="23" r="7" fill="#b9983c" />
          <circle cx="22" cy="17" r="5" fill="#d1a43e" />
          <path d="M19 24v12" stroke="#6b4a22" />
          <circle cx="68" cy="22" r="5" fill="#6f9b3e" />
          <circle cx="76" cy="28" r="4" fill="#86a84a" />
          <path d="M69 24v14" stroke="#6b4a22" />
        </Svg>
      </div>
    </div>
    <div className="w-[46px] flex justify-center">
      <Svg w={16} h={15}>
        <path d="M0 0.500h14M0 14.500h14M0 4h10v7H0M15 4v7" fill="none" stroke="#fff" />
      </Svg>
    </div>
    <div className="w-[3px]" />
    <AppSlot w="w-[49px]">
      <Svg w={22} h={26}>
        <path d="M0 1h9l2 3h11v20H0z" fill="#f4c945" />
        <path d="M0 9h22v15H0z" fill="#fbe291" />
        <rect x="4" y="18" width="14" height="8" fill="#2f8fdc" />
        <rect x="8" y="20" width="6" height="6" fill="#f4c945" />
      </Svg>
    </AppSlot>
    <AppSlot w="w-[49px]">
      <Svg w={24} h={24}>
        <circle cx="12" cy="12" r="12" fill="#e03c31" />
        <path d="M12 12L1.600 18A12 12 0 0 0 18 22.400z" fill="#34a853" />
        <path d="M12 12l6 10.400A12 12 0 0 0 22.400 6H12z" fill="#fbc02d" />
        <circle cx="12" cy="12" r="5.500" fill="#4285f4" stroke="#fff" strokeWidth="1.500" />
      </Svg>
    </AppSlot>
    <AppSlot w="w-[49px]" running={false}>
      <Svg w={24} h={24}>
        <rect width="24" height="24" fill="#8cc152" />
        <path d="M2 0l10 20L22 0" fill="#5f9a39" />
        <path d="M3 2l9 18 3-2z" fill="#eef5e0" />
        <path d="M12 20L7 14" stroke="#333" />
      </Svg>
    </AppSlot>
    <AppSlot w="w-[48px]" active>
      <Svg w={21} h={24}>
        <rect x="0" y="2" width="21" height="22" fill="#0d8f8f" />
        <rect x="4" y="0" width="17" height="21" fill="#2a4aa8" />
        <text x="12.500" y="14.500" textAnchor="middle" fontSize="9" fontWeight="700" fill="#fff" fontFamily="Noto Sans, sans-serif">SE</text>
      </Svg>
    </AppSlot>
    <AppSlot w="w-[49px]">
      <Svg w={24} h={24}>
        <circle cx="12" cy="12" r="11.500" fill="#dff3ff" stroke="#1a8fe0" strokeWidth="1" />
        <circle cx="12" cy="12" r="9" fill="#2aa0ec" />
        <circle cx="12" cy="12" r="6" fill="#222" />
        <path d="M14 6a6 6 0 0 1 4 6" stroke="#fff" strokeWidth="1.500" fill="none" />
      </Svg>
    </AppSlot>
    <AppSlot w="w-[49px]">
      <Svg w={22} h={24}>
        <rect width="22" height="24" rx="3" fill="#2aa5dc" />
        <path d="M0 21L11 4l11 17v1a2 2 0 0 1-2 2H2a2 2 0 0 1-2-2z" fill="#2658b8" />
        <path d="M0 24l12-10 10 10z" fill="#43cbe8" />
        <circle cx="16" cy="5" r="2" fill="#fff" />
      </Svg>
    </AppSlot>
    <div className="ml-auto mr-[21px] flex items-center">
      <Svg w={24} h={24}>
        <circle cx="11" cy="11" r="11" fill="#f08a1c" />
        <path d="M5 21c-2-3 1-7 5-6 1-3 7-3 8 1 3 0 4 5 0 5z" fill="#bcd8f0" />
      </Svg>
      <span className="ml-[6px] text-[14px]">34°C</span>
      <span className="ml-[9px] text-[13px]">Cerah</span>
      <div className="ml-[25px]">
        <Svg w={14} h={8}>
          <path d="M1 7l6-6 6 6" stroke="#fff" fill="none" />
        </Svg>
      </div>
      <div className="ml-[6px]">
        <Svg w={16} h={16}>
          <rect x="0.500" y="0.500" width="15" height="11" fill="none" stroke="#fff" />
          <rect x="0.500" y="0.500" width="4" height="4" fill="#1b1b1b" stroke="#fff" />
          <path d="M8 12v3M4 15.500h8" stroke="#fff" />
        </Svg>
      </div>
      <div className="ml-[9px]">
        <Svg w={16} h={15}>
          <path d="M0.500 5h3L7 1.500v10L3.500 8h-3z" fill="none" stroke="#fff" />
          <circle cx="12" cy="11" r="4" fill="#e8112d" />
          <path d="M10.500 9.500l3 3M13.500 9.500l-3 3" stroke="#fff" />
        </Svg>
      </div>
      <div className="ml-[9px] w-[24px] text-center text-[12px] leading-[18px]">
        <div>ENG</div>
        <div>US</div>
      </div>
      <div className="ml-[11px] w-[60px] text-center text-[12px] leading-[18px]">
        <div>17:09</div>
        <div>20/09/2023</div>
      </div>
      <div className="ml-[18px] relative w-[20px]">
        <Svg w={16} h={15}>
          <path d="M0 0h16v12H6l-2 3v-3H0z" fill="#fff" />
          <path d="M3 3h10M3 6h10M3 9h6" stroke="#333" />
        </Svg>
        <div className="absolute top-[3px] left-[7px] w-[16px] h-[16px] rounded-full bg-[#3a3a3a] border border-[#aaa] text-[11px] leading-[14px] text-center font-bold">2</div>
      </div>
    </div>
  </div>
);

export default function App() {
  return (
    <div className="w-[1920px] h-[1080px] overflow-hidden flex flex-col font-['Noto_Sans',sans-serif] bg-white">
      <TitleBar />
      <Ribbon />
      <div className="flex-1 flex min-h-0">
        <div className="flex-1 min-w-0 flex flex-col">
          <div className="h-[23px] border-t border-[#a8a8a8] border-b-2 border-b-[#d0d0d0] flex items-center box-content text-[12.500px] text-[#111]">
            <div className="w-[35px] flex justify-center shrink-0 border-r border-[#b5b5b5] h-full items-center">
              <Svg w={20} h={9}>
                <rect x="0" y="0" width="20" height="9" fill="#35628f" />
                <rect x="2" y="3" width="4" height="4" fill="#cfe0f0" />
                <rect x="8" y="3" width="4" height="4" fill="#cfe0f0" />
                <rect x="14" y="3" width="4" height="4" fill="#cfe0f0" />
              </Svg>
            </div>
            <span className="ml-[2px] whitespace-nowrap">Select components to edit or click the Insert Component command, Create Part In-Place command, Parts Library tab or drag components from Windows Explorer.</span>
          </div>
          <DocTabs />
          <div className="flex-1 flex min-h-0">
            <PathFinder />
            <div className="flex-1 min-w-0 bg-[#f9fcfb] relative overflow-hidden">
              <Valve />
              <NavCube />
            </div>
          </div>
        </div>
        <SidePanel />
      </div>
      <StatusBar />
      <Taskbar />
    </div>
  );
}
